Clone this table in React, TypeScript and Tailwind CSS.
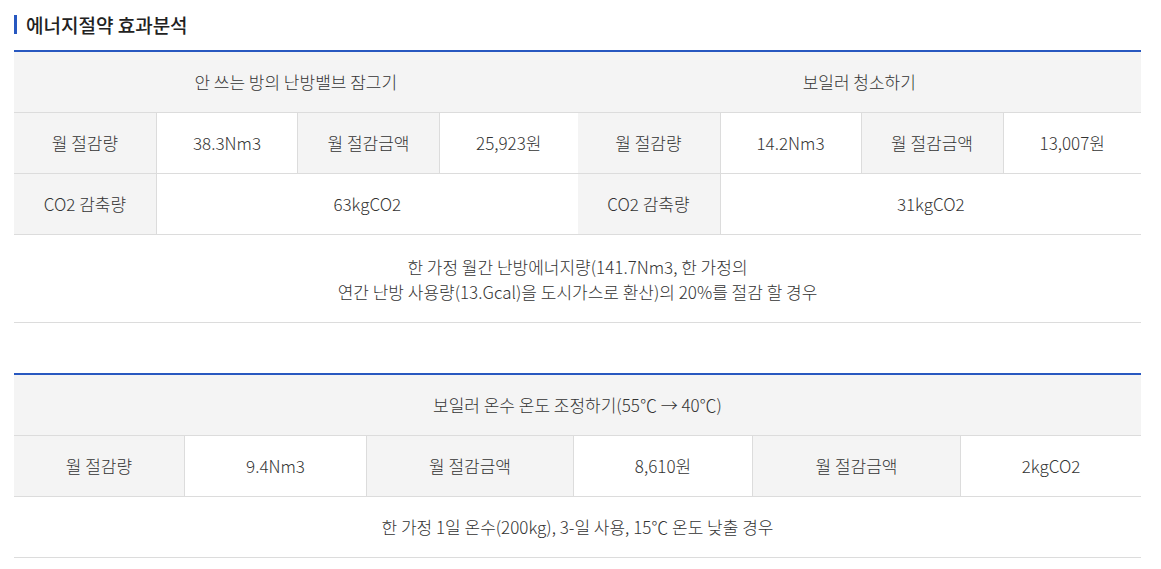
import React from 'react';

const font = { fontFamily: '"Noto Sans CJK KR", "Noto Sans", sans-serif' };

function Th({ w, children, border = true }: { w: string; children: React.ReactNode; border?: boolean }) {
  return (
    <div className={`${w} flex items-center justify-center bg-[#f4f4f4] ${border ? 'border-l border-[#dcdcdc]' : ''}`}>
      {children}
    </div>
  );
}

function Td({ w, children, border = true }: { w: string; children: React.ReactNode; border?: boolean }) {
  return (
    <div className={`${w} flex items-center justify-center bg-white ${border ? 'border-l border-[#dcdcdc]' : ''}`}>
      {children}
    </div>
  );
}

function Half({ title, a, b, co2 }: { title: string; a: string; b: string; co2: string }) {
  return (
    <div className="flex flex-1 flex-col">
      <div className="flex h-[61px] items-center justify-center border-b border-[#dcdcdc] bg-[#f4f4f4]">{title}</div>
      <div className="flex h-[61px] border-b border-[#dcdcdc]">
        <Th w="w-[142px]" border={false}>월 절감량</Th>
        <Td w="w-[141px]">{a}</Td>
        <Th w="w-[142px]">월 절감금액</Th>
        <Td w="flex-1">{b}</Td>
      </div>
      <div className="flex h-[61px] border-b border-[#dcdcdc]">
        <Th w="w-[142px]" border={false}>CO2 감축량</Th>
        <Td w="flex-1">{co2}</Td>
      </div>
    </div>
  );
}

export default function App() {
  return (
    <div className="min-h-screen bg-white pl-[14px] pt-[15px] text-[17px] font-light text-[#333]" style={font}>
      <h2 className="flex h-[19px] items-center border-l-[3px] border-[#2858c0] pl-[9px] text-[19px] font-medium leading-none text-[#222]">
        에너지절약 효과분석
      </h2>

      <div className="mt-[16px] w-[1127px] border-t-2 border-[#2858c0]">
        <div className="flex">
          <Half title="안 쓰는 방의 난방밸브 잠그기" a="38.3Nm3" b="25,923원" co2="63kgCO2" />
          <Half title="보일러 청소하기" a="14.2Nm3" b="13,007원" co2="31kgCO2" />
        </div>
        <div className="flex h-[88px] flex-col items-center justify-center border-b border-[#dcdcdc] text-center leading-[25px]">
          <p>한 가정 월간 난방에너지량(141.7Nm3, 한 가정의</p>
          <p>연간 난방 사용량(13.Gcal)을 도시가스로 환산)의 20%를 절감 할 경우</p>
        </div>
      </div>

      <div className="mt-[50px] w-[1127px] border-t-2 border-[#2858c0]">
        <div className="flex h-[61px] items-center justify-center border-b border-[#dcdcdc] bg-[#f4f4f4]">
          보일러 온수 온도 조정하기(55℃ → 40℃)
        </div>
        <div className="flex h-[61px] border-b border-[#dcdcdc]">
          <Th w="w-[170px]" border={false}>월 절감량</Th>
          <Td w="w-[182px]">9.4Nm3</Td>
          <Th w="w-[207px]">월 절감금액</Th>
          <Td w="w-[179px]">8,610원</Td>
          <Th w="w-[208px]">월 절감금액</Th>
          <Td w="flex-1">2kgCO2</Td>
        </div>
        <div className="flex h-[61px] items-center justify-center border-b border-[#dcdcdc]">
          한 가정 1일 온수(200kg), 3-일 사용, 15℃ 온도 낮출 경우
        </div>
      </div>
    </div>
  );
}
